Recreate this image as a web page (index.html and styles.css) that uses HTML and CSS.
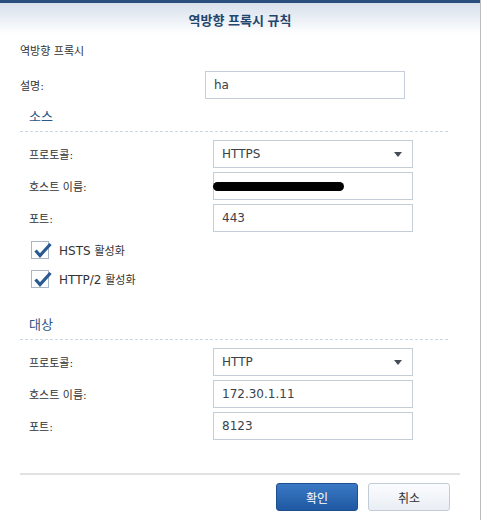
FILE: index.html
```html
<!DOCTYPE html>
<html lang="ko">
<head>
<meta charset="utf-8">
<title>역방향 프록시 규칙</title>
<link rel="stylesheet" href="styles.css">
</head>
<body>
<div class="dialog">
  <div class="titlebar"><span class="title">역방향 프록시 규칙</span></div>
  <div class="content">
    <div class="intro">역방향 프록시</div>
    <div class="row">
      <span class="lbl">설명:</span>
      <div class="field">ha</div>
    </div>

    <div class="section">
      <div class="sec-title">소스</div>
      <div class="sec-body">
        <div class="row">
          <span class="lbl">프로토콜:</span>
          <div class="field select"><span class="val">HTTPS</span><span class="arrow"></span></div>
        </div>
        <div class="row">
          <span class="lbl">호스트 이름:</span>
          <div class="field"><span class="redact"></span></div>
        </div>
        <div class="row">
          <span class="lbl">포트:</span>
          <div class="field">443</div>
        </div>
        <div class="check first">
          <span class="box"><svg class="tick" width="22" height="20" viewBox="0 0 22 20"><path d="M3.5 8.5 L8 13.5 L18.5 2" fill="none" stroke="#2a5a92" stroke-width="3.2" stroke-linejoin="miter" stroke-linecap="butt"/></svg></span>
          <span class="ctext">HSTS <span class="ko">활성화</span></span>
        </div>
        <div class="check">
          <span class="box"><svg class="tick" width="22" height="20" viewBox="0 0 22 20"><path d="M3.5 8.5 L8 13.5 L18.5 2" fill="none" stroke="#2a5a92" stroke-width="3.2" stroke-linejoin="miter" stroke-linecap="butt"/></svg></span>
          <span class="ctext">HTTP/2 <span class="ko">활성화</span></span>
        </div>
      </div>
    </div>

    <div class="section second">
      <div class="sec-title">대상</div>
      <div class="sec-body">
        <div class="row">
          <span class="lbl">프로토콜:</span>
          <div class="field select"><span class="val">HTTP</span><span class="arrow"></span></div>
        </div>
        <div class="row">
          <span class="lbl">호스트 이름:</span>
          <div class="field">172.30.1.11</div>
        </div>
        <div class="row">
          <span class="lbl">포트:</span>
          <div class="field">8123</div>
        </div>
      </div>
    </div>
  </div>
  <div class="footer">
    <button class="btn primary">확인</button>
    <button class="btn">취소</button>
  </div>
</div>
</body>
</html>
```
FILE: styles.css
```css
html, body {
  margin: 0;
  padding: 0;
  background: #ffffff;
}
body {
  font-family: "DejaVu Sans", "Noto Sans CJK KR", sans-serif;
  font-size: 12px;
  color: #333a42;
}
.dialog {
  width: 481px;
  height: 520px;
  box-sizing: border-box;
  border-right: 1px solid #bdbdbd;
  overflow: hidden;
}
.titlebar {
  border-top: 3px solid #2a4f7f;
  height: 30px;
  background: linear-gradient(to bottom, #d8e0eb 0%, #eef2f7 60%, #ffffff 100%);
  display: flex;
  align-items: center;
  justify-content: center;
  padding-top: 1px;
  box-sizing: content-box;
}
.title {
  font-family: "Noto Sans CJK KR", "DejaVu Sans", sans-serif;
  font-size: 13px;
  font-weight: bold;
  color: #23466f;
}
.content {
  padding: 0 31px 0 20px;
}
.intro {
  margin-top: 8px;
  line-height: 20px;
  font-size: 11px;
  color: #333;
}
.row {
  display: flex;
  align-items: center;
  height: 28px;
  margin-top: 9px;
}
.sec-body .row {
  margin-top: 4px;
}
.sec-body .row:first-child {
  margin-top: 0;
}
.lbl {
  width: 185px;
  flex: none;
  font-size: 11px;
  color: #333;
}
.sec-body .lbl {
  width: 184px;
}
.field {
  width: 200px;
  height: 28px;
  box-sizing: border-box;
  border: 1px solid #c5cdd8;
  background: #fff;
  display: flex;
  align-items: center;
  padding-left: 8px;
  font-size: 12px;
  color: #3a4149;
}
.field.select {
  justify-content: space-between;
  padding-right: 10px;
}
.arrow {
  width: 0;
  height: 0;
  border-left: 4px solid transparent;
  border-right: 4px solid transparent;
  border-top: 5px solid #454c55;
}
.redact {
  display: block;
  width: 131px;
  height: 9px;
  margin-left: -9px;
  border-radius: 5px;
  background: #000;
}
.section {
  margin-top: 8px;
}
.section.second {
  margin-top: 27px;
}
.sec-title {
  font-size: 13px;
  line-height: 20px;
  color: #2d5586;
  padding: 0 0 5px 9px;
  background: repeating-linear-gradient(to right, #cdd7e2 0 3px, transparent 3px 5px) left bottom / 100% 1px no-repeat;
}
.sec-body {
  padding: 8px 0 0 9px;
}
.check {
  display: flex;
  align-items: center;
  height: 18px;
  margin-top: 11px;
  padding-left: 2px;
}
.check.first {
  margin-top: 9px;
}
.box {
  position: relative;
  width: 18px;
  height: 18px;
  box-sizing: border-box;
  border: 1px solid #aab6c5;
  background: #fff;
  flex: none;
}
.tick {
  position: absolute;
  left: 0;
  top: 0;
  overflow: visible;
}
.ctext {
  margin-left: 10px;
  font-size: 12px;
  color: #333;
}
.ko {
  font-size: 11px;
}
.footer {
  margin: 33px 20px 0 20px;
  border-top: 2px solid #e2e2e2;
  padding: 8px 10px 0 0;
  display: flex;
  justify-content: flex-end;
  gap: 10px;
}
.btn {
  width: 82px;
  height: 28px;
  box-sizing: border-box;
  border: 1px solid #c2cbd7;
  border-radius: 3px;
  background: linear-gradient(to bottom, #fbfcfe, #e9eef4);
  font-family: "Noto Sans CJK KR", "DejaVu Sans", sans-serif;
  font-size: 12px;
  color: #333;
  padding: 0;
}
.btn.primary {
  border-color: #1e4f8e;
  background: linear-gradient(to bottom, #3b79c4, #1f58a3);
  color: #ffffff;
}
```
